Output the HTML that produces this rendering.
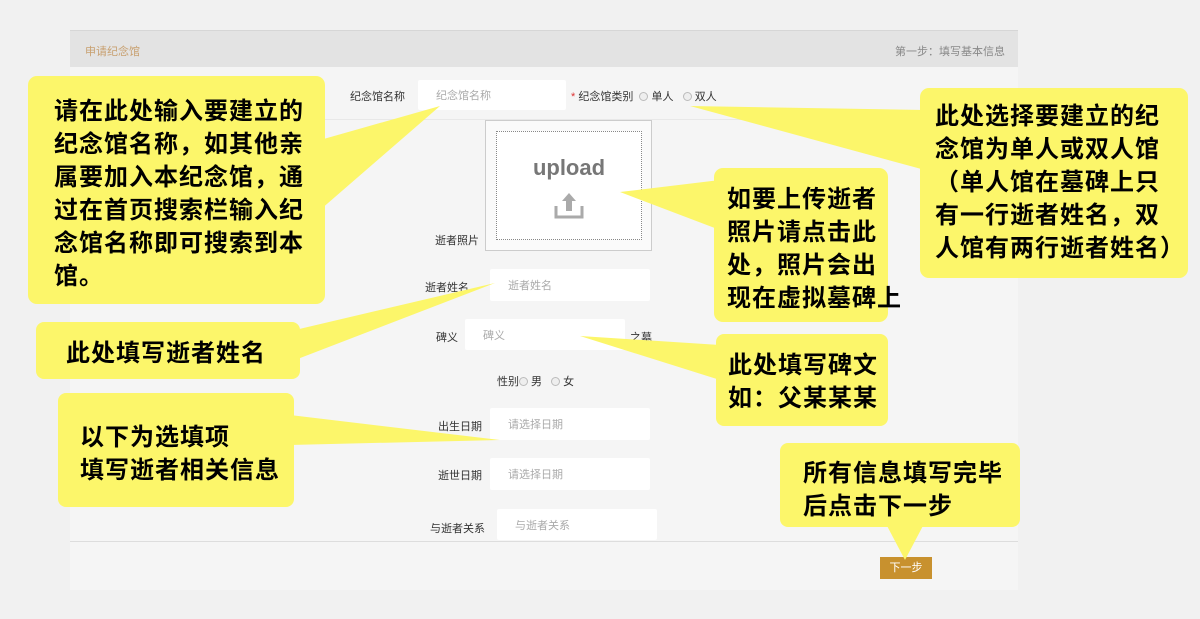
<!DOCTYPE html>
<html><head><meta charset="utf-8"><style>
*{margin:0;padding:0;box-sizing:border-box}
body{width:1200px;height:619px;overflow:hidden;background:#f1f1f1;position:relative;font-family:"Liberation Sans","Noto Sans CJK SC",sans-serif}
.a{position:absolute}
.panel{left:70px;top:30px;width:948px;height:560px;background:#f5f5f5}
.hdr{left:70px;top:30px;width:948px;height:37px;background:#e3e3e3;border-top:1px solid #d6d6d6}
.lbl{font-size:11px;color:#333;white-space:nowrap}
.inp{background:#fff;border-radius:2px;font-size:11px;color:#aaa;padding-left:18px;display:flex;align-items:center}
.t{font-size:24px;letter-spacing:1px;line-height:33px;color:#000;white-space:nowrap;font-family:"Noto Sans CJK SC",sans-serif;font-weight:700}
.rad{display:inline-block;width:9px;height:9px;border-radius:50%;border:1px solid #bbb;background:#eee;vertical-align:-1px;margin-right:3px}
</style></head><body>
<div class="a panel"></div>
<div class="a hdr"></div>
<div class="a" style="left:70px;top:119px;width:948px;height:1px;background:#e8e8e8"></div>
<div class="a" style="left:70px;top:541px;width:948px;height:1px;background:#ddd"></div>
<div class="a lbl" style="left:85px;top:43px;color:#c8a070">申请纪念馆</div>
<div class="a lbl" style="left:895px;top:43px;color:#888">第一步：填写基本信息</div>

<div class="a lbl" style="left:350px;top:88px">纪念馆名称</div>
<div class="a inp" style="left:418px;top:80px;width:148px;height:30px">纪念馆名称</div>
<div class="a lbl" style="left:571px;top:88px"><span style="color:#d33">*</span> 纪念馆类别 &nbsp;<span class="rad"></span>单人 &nbsp;&nbsp;<span class="rad"></span>双人</div>

<div class="a" style="left:485px;top:120px;width:167px;height:131px;border:1px solid #ccc;background:#fafafa"></div>
<div class="a" style="left:496px;top:131px;width:146px;height:109px;border:1px dotted #888;background:#fff"></div>
<div class="a" style="left:496px;top:155px;width:146px;text-align:center;font-size:22px;font-weight:bold;color:#777">upload</div>
<svg class="a" style="left:553px;top:191px" width="32" height="30" viewBox="0 0 32 30"><path d="M16 2 L23 10 H19 V20 H13 V10 H9 Z" fill="#aaa"/><path d="M3 15 V26 H29 V15" fill="none" stroke="#aaa" stroke-width="3"/></svg>
<div class="a lbl" style="left:435px;top:232px">逝者照片</div>

<div class="a lbl" style="left:425px;top:279px">逝者姓名</div>
<div class="a inp" style="left:490px;top:269px;width:160px;height:32px">逝者姓名</div>
<div class="a lbl" style="left:436px;top:329px">碑义</div>
<div class="a inp" style="left:465px;top:319px;width:160px;height:31px">碑义</div>
<div class="a lbl" style="left:630px;top:329px">之墓</div>
<div class="a lbl" style="left:497px;top:373px">性别<span class="rad"></span>男 &nbsp;&nbsp;<span class="rad"></span>女</div>
<div class="a lbl" style="left:438px;top:418px">出生日期</div>
<div class="a inp" style="left:490px;top:408px;width:160px;height:32px">请选择日期</div>
<div class="a lbl" style="left:438px;top:467px">逝世日期</div>
<div class="a inp" style="left:490px;top:458px;width:160px;height:32px">请选择日期</div>
<div class="a lbl" style="left:430px;top:520px">与逝者关系</div>
<div class="a inp" style="left:497px;top:509px;width:160px;height:31px">与逝者关系</div>

<div class="a" style="left:880px;top:557px;width:52px;height:22px;background:#c8912e;color:#fff;font-size:11px;text-align:center;line-height:22px">下一步</div>

<svg class="a" style="left:0;top:0" width="1200" height="619">
<g fill="#fcf66a">
<rect x="28" y="76" width="297" height="228" rx="9"/><polygon points="320,140 440,106 320,210"/>
<rect x="920" y="88" width="268" height="190" rx="9"/><polygon points="925,110 690,106 925,170"/>
<rect x="714" y="168" width="174" height="154" rx="9"/><polygon points="720,180 620,192 720,230"/>
<rect x="36" y="322" width="264" height="57" rx="8"/><polygon points="295,330 495,283 295,360"/>
<rect x="716" y="334" width="172" height="92" rx="8"/><polygon points="720,345 580,336 720,380"/>
<rect x="58" y="393" width="236" height="114" rx="8"/><polygon points="290,415 500,440 290,445"/>
<rect x="780" y="443" width="240" height="84" rx="8"/><polygon points="885,522 905,560 925,522"/>
</g></svg>

<div class="a t" style="left:54px;top:92px">请在此处输入要建立的<br>纪念馆名称，如其他亲<br>属要加入本纪念馆，通<br>过在首页搜索栏输入纪<br>念馆名称即可搜索到本<br>馆。</div>
<div class="a t" style="left:935px;top:97px">此处选择要建立的纪<br>念馆为单人或双人馆<br>（单人馆在墓碑上只<br>有一行逝者姓名，双<br>人馆有两行逝者姓名）</div>
<div class="a t" style="left:727px;top:180px">如要上传逝者<br>照片请点击此<br>处，照片会出<br>现在虚拟墓碑上</div>
<div class="a t" style="left:66px;top:334px">此处填写逝者姓名</div>
<div class="a t" style="left:728px;top:346px">此处填写碑文<br>如：父某某某</div>
<div class="a t" style="left:80px;top:418px">以下为选填项<br>填写逝者相关信息</div>
<div class="a t" style="left:803px;top:454px">所有信息填写完毕<br>后点击下一步</div>
</body></html>
